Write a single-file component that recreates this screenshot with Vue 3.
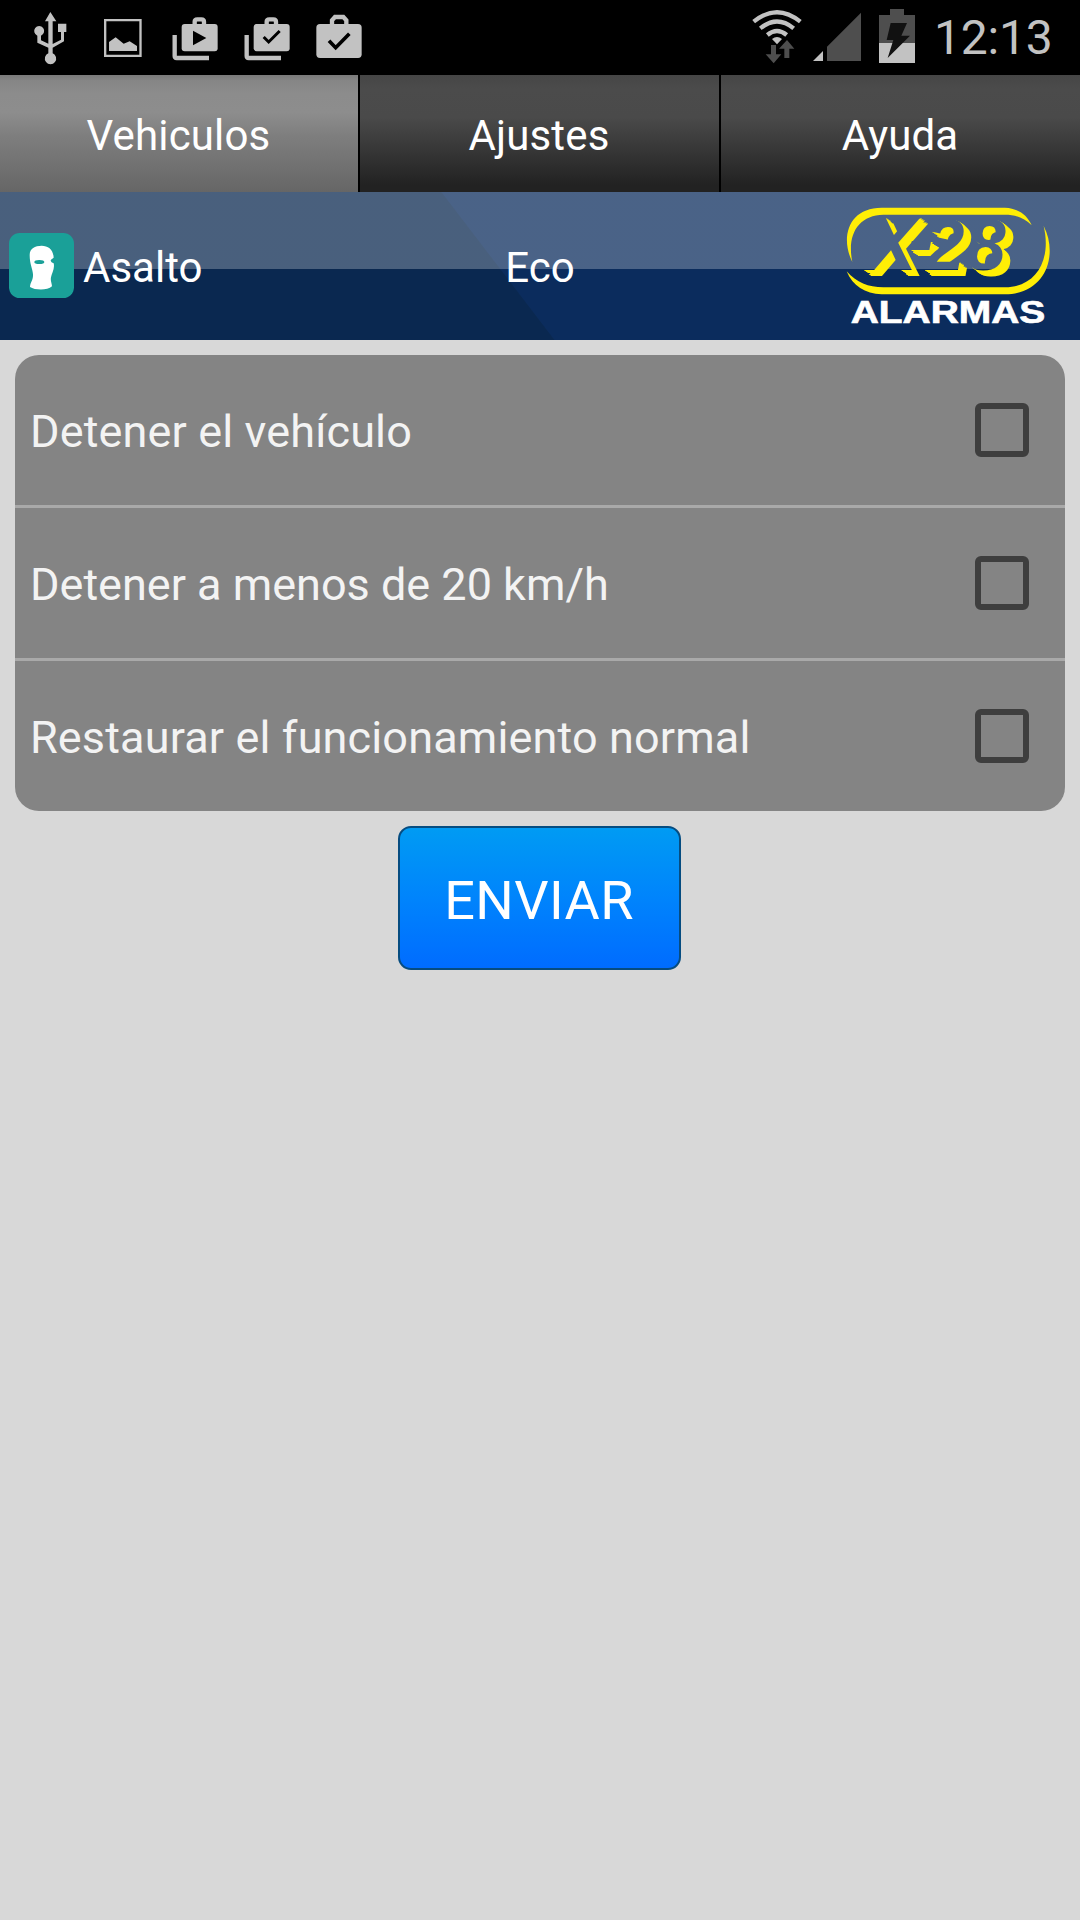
<script setup>
import { ref } from 'vue'

const tabs = ['Vehiculos', 'Ajustes', 'Ayuda']
const active = ref('Vehiculos')

const options = ref([
  { id: 'stop', label: 'Detener el vehículo', checked: false },
  { id: 'slow', label: 'Detener a menos de 20 km/h', checked: false },
  { id: 'restore', label: 'Restaurar el funcionamiento normal', checked: false },
])
</script>

<template>
  <div class="screen">
    <div class="status">
      <div class="notifications">
        <svg viewBox="78 0 150 225">
          <path d="M151 36l18 28h-11v68l25-13V96h-9V71h25v25h-7v28l-34 19v17a17 17 0 1 1-13 0v-17l-33-15v-21a15 15 0 1 1 11 0v14l22 10V64h-10z" />
        </svg>
        <svg viewBox="294 0 150 225">
          <path d="M312 57h113v114H312zm7 7v100h99V64z" fill-rule="evenodd" />
          <path d="M327 153v-27l20-14 24 19 18-7 22 14v15z" />
        </svg>
        <svg viewBox="510 0 150 225">
          <path class="line" d="M524 105v63q0 6 6 6h97" />
          <path class="line" d="M584 76V65q0-7 8-7h12q8 0 8 7v11" />
          <rect x="545" y="72" width="108" height="82" rx="9" />
          <path class="cut" d="M579 92v44l40-22z" />
        </svg>
        <svg viewBox="726 0 150 225">
          <path class="line" d="M740 105v63q0 6 6 6h97" />
          <path class="line" d="M800 76V65q0-7 8-7h12q8 0 8 7v11" />
          <rect x="761" y="72" width="108" height="82" rx="9" />
          <path class="tick" d="M791 111l15 15 33-33" />
        </svg>
        <svg viewBox="942 0 150 225">
          <path class="line" d="M996 76V61l9-10h25l9 10v15" />
          <rect x="949" y="72" width="136" height="102" rx="11" />
          <path class="tick thick" d="M987 122l20 21 41-42" />
        </svg>
      </div>
      <div class="system">
        <svg class="wifi" viewBox="60 0 162 225">
          <g class="waves">
            <path d="M71 65q70-57 140 0" />
            <path d="M91 85q50-41 100 0" />
            <path d="M112 105q29-24 58 0" />
          </g>
          <path d="M126 117q15-12 30 0l-15 16z" />
          <path class="dim" d="M123 135h15v28h16l-23 27-24-27h16zM163 174v-28h-16l24-26 22 26h-15v28z" />
        </svg>
        <svg class="signal" viewBox="246 0 150 225">
          <path d="M279 153v30h-30z" />
          <path class="dim" d="M291 183v-43L393 38v145z" />
        </svg>
        <svg class="battery" viewBox="444 0 114 225">
          <path class="dim" d="M447 45h33V27h42v18h33v84H447z" />
          <path d="M447 129h108v60H447z" />
          <path class="bolt" d="M482 69h49l-17 38h26l-67 67 17-54h-20z" />
        </svg>
        <span class="time">12:13</span>
      </div>
    </div>

    <nav class="tabs">
      <button
        v-for="tab in tabs"
        :key="tab"
        class="tab"
        :class="{ active: tab === active }"
        @click="active = tab"
      >
        {{ tab }}
      </button>
    </nav>

    <header class="header">
      <div class="mode">
        <svg class="mask" viewBox="0 0 195 195">
          <rect width="195" height="195" rx="32" fill="#1aa098" />
          <path
            fill="#fff"
            d="M62 66C62 46 78 38 98 38C118 38 133 50 134 74L126 80C123 84 128 89 134 91C138 108 128 120 126 133C124 144 128 148 129 160C115 173 78 172 63 162C64 146 73 142 72 124C71 106 62 95 62 66Z"
          />
          <ellipse cx="91" cy="87" rx="15" ry="6" fill="#1aa098" />
        </svg>
        <span>Asalto</span>
      </div>
      <span class="vehicle">Eco</span>
      <svg class="logo" viewBox="60 36 648 378">
        <defs>
          <text id="brand" class="brand">
            <tspan x="138" y="236">X</tspan>
            <tspan x="264" y="222">-</tspan>
            <tspan class="digit" x="314" y="236">2</tspan>
            <tspan class="digit" x="438" y="236">8</tspan>
          </text>
          <mask id="face" maskUnits="userSpaceOnUse" x="60" y="36" width="648" height="378">
            <rect x="60" y="36" width="648" height="378" fill="#fff" />
            <use href="#brand" fill="#000" />
          </mask>
        </defs>
        <g fill="#ffee05">
          <path d="M97 213C60 140 85 50 185 50L555 50C595 52 622 72 635 103C612 80 585 71 555 71L190 71C115 73 80 130 97 213Z" />
          <path d="M671 105C715 190 680 308 555 310L185 310C135 308 98 285 80 241C110 275 145 289 190 289L555 289C650 288 695 205 671 105Z" />
          <g mask="url(#face)">
            <use v-for="n in 5" :key="n" href="#brand" :x="n * 4.6" :y="n * 3.8" />
          </g>
        </g>
        <text class="alarmas" x="92" y="396" textLength="584" lengthAdjust="spacingAndGlyphs">ALARMAS</text>
      </svg>
    </header>

    <main class="content">
      <ul class="options">
        <li v-for="o in options" :key="o.id">
          <label>
            <span>{{ o.label }}</span>
            <input v-model="o.checked" type="checkbox" />
          </label>
        </li>
      </ul>
      <button class="send">ENVIAR</button>
    </main>
  </div>
</template>

<style>
body {
  background: #d8d8d8;
}
</style>

<style scoped>
.screen {
  min-height: 1920px;
  background: #d8d8d8;
  font-family: Roboto, sans-serif;
  color: #fff;
}

button {
  border: 0;
  padding: 0;
  font-family: inherit;
  color: inherit;
}

.status {
  display: flex;
  justify-content: space-between;
  height: 75px;
  padding: 0 28px 0 26px;
  background: #000;
}

.status svg {
  display: block;
  height: 75px;
  fill: #c2c2c2;
}

.notifications {
  display: flex;
  gap: 22px;
}

.notifications svg {
  width: 50px;
}

.status .line {
  fill: none;
  stroke: #c2c2c2;
  stroke-width: 13;
}

.status .cut {
  fill: #000;
}

.status .tick {
  fill: none;
  stroke: #000;
  stroke-width: 9;
}

.status .thick {
  stroke-width: 11;
}

.system {
  display: flex;
}

.wifi {
  width: 54px;
}

.signal {
  width: 50px;
  margin-left: 8px;
}

.battery {
  width: 38px;
  margin-left: 16px;
}

.status .waves {
  fill: none;
  stroke: #c2c2c2;
  stroke-width: 13;
}

.status .dim {
  fill: #4e4e4e;
}

.status .bolt {
  fill: #111;
}

.time {
  width: 118px;
  margin-left: 18px;
  line-height: 75px;
  font-size: 48px;
  letter-spacing: -0.2px;
  color: #c2c2c2;
}

.tabs {
  display: grid;
  grid-template-columns: 358px 359px 359px;
  gap: 2px;
  height: 117px;
  background: #000;
}

.tab {
  padding: 4px 1px 0 0;
  background: linear-gradient(#464646, #4b4b4b 12%, #4a4a4a 36%, #383838 62%, #222 94%, #222);
  font-size: 42px;
  letter-spacing: 0.15px;
}

.tab.active {
  background: linear-gradient(#7a7a7a, #868686 5%, #8c8c8c 16%, #8d8d8d 32%, #7e7e7e 52%, #666);
}

.header {
  display: grid;
  grid-template-columns: 1fr auto 1fr;
  align-items: center;
  height: 148px;
  box-sizing: border-box;
  padding: 0 9px 1px;
  background:
    linear-gradient(rgba(255, 255, 255, 0.26) 77px, transparent 77px),
    linear-gradient(52.6deg, #0a2850 440px, #0b2c5d 441px);
  font-size: 42px;
}

.mode {
  display: flex;
  align-items: center;
  gap: 9px;
}

.mode span,
.vehicle {
  padding-top: 4px;
}

.mask {
  width: 65px;
  height: 65px;
}

.logo {
  justify-self: end;
  width: 216px;
  height: 126px;
  margin-right: 15px;
}

.brand {
  font: italic bold 228px 'Liberation Sans', sans-serif;
}

.digit {
  font-size: 214px;
}

.alarmas {
  font: bold 93px 'Liberation Sans', sans-serif;
  fill: #fff;
  stroke: #fff;
  stroke-width: 2;
}

.content {
  display: flex;
  flex-direction: column;
  align-items: center;
  gap: 15px;
  padding: 15px;
}

.options {
  align-self: stretch;
  margin: 0;
  padding: 0;
  overflow: hidden;
  list-style: none;
  border-radius: 24px;
  background: #848484;
  color: #f3f3f3;
  font-size: 45px;
}

.options li + li {
  border-top: 3px solid #a9a9a9;
}

.options label {
  display: flex;
  align-items: center;
  justify-content: space-between;
  height: 150px;
  padding: 0 36px 0 15px;
}

.options span {
  padding-top: 3px;
  letter-spacing: 0.14px;
}

.options li:nth-child(2) span {
  letter-spacing: 0;
}

.options input {
  appearance: none;
  width: 54px;
  height: 54px;
  margin: 0;
  box-sizing: border-box;
  border: 6px solid #3e3e3e;
  border-radius: 6px;
}

.send {
  width: 283px;
  height: 144px;
  margin-right: 1px;
  box-sizing: border-box;
  padding: 5px 1px 0 0;
  border: 2px solid #064c80;
  border-radius: 13px;
  background: linear-gradient(#009bf3, #0084fc 50%, #006cff);
  font-size: 54px;
  letter-spacing: 0.4px;
}
</style>
